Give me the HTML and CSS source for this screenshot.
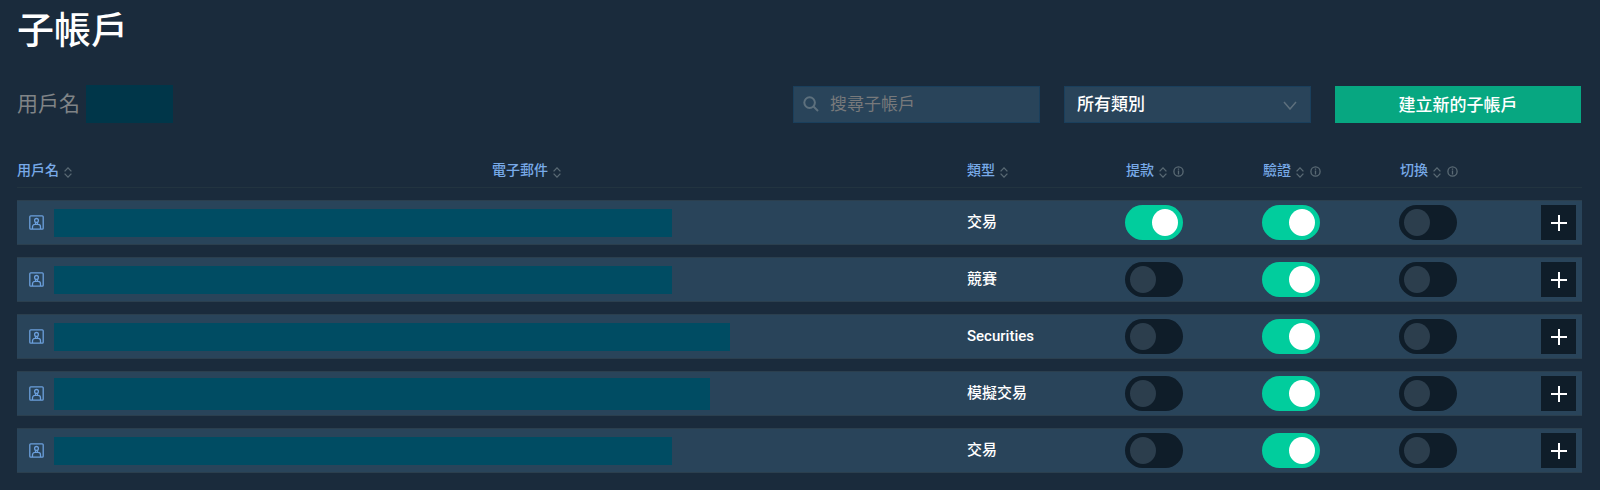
FILE: index.html
```html
<!DOCTYPE html>
<html lang="zh-Hant">
<head>
  <meta charset="UTF-8">
  <meta name="viewport" content="width=device-width, initial-scale=1.0">
  <title>子帳戶</title>
  <link rel="stylesheet" href="styles.css">
</head>
<body>

  <!-- Shared icons -->
  <svg class="sprite" aria-hidden="true">
    <symbol id="sort" viewBox="0 0 8 11">
      <path d="M0.6 4.4 4 0.9 7.4 4.4M0.6 6.6 4 10.1 7.4 6.6"/>
    </symbol>
    <symbol id="info" viewBox="0 0 11 11">
      <circle cx="5.5" cy="5.5" r="4.6"/>
      <path d="M5.5 2.6v1.2M5.5 4.6v3.8"/>
    </symbol>
    <symbol id="user" viewBox="0 0 15 15">
      <rect x="0.8" y="0.8" width="13.4" height="13.4" rx="1"/>
      <circle cx="7.5" cy="5.4" r="1.9"/>
      <path d="M3.5 14v-2.2a2.4 2.4 0 0 1 2.4-2.4h3.2a2.4 2.4 0 0 1 2.4 2.4V14M6.5 7.3v2M8.5 7.3v2"/>
    </symbol>
    <symbol id="plus" viewBox="0 0 16 16">
      <path d="M8 0v16M0 8h16"/>
    </symbol>
  </svg>

  <main>
    <h1>子帳戶</h1>

    <div class="toolbar">
      <div class="account">用戶名 <span class="account-name"></span></div>

      <div class="search">
        <svg class="search-icon" viewBox="0 0 16 16" aria-hidden="true">
          <circle cx="6.6" cy="6.6" r="5.3"/>
          <path d="M10.5 10.5 15 15"/>
        </svg>
        <input type="text" placeholder="搜尋子帳戶" aria-label="搜尋子帳戶">
      </div>

      <div class="filter">
        <select aria-label="類別">
          <option>所有類別</option>
        </select>
        <svg class="arrow" viewBox="0 0 14 9" aria-hidden="true"><path d="M1 1l6 7 6-7"/></svg>
      </div>

      <button class="create" type="button">建立新的子帳戶</button>
    </div>

    <table>
      <colgroup>
        <col>
        <col>
        <col class="col-type">
        <col class="col-switch">
        <col class="col-switch">
        <col class="col-switch">
        <col class="col-more">
      </colgroup>
      <thead>
        <tr>
          <th>用戶名<svg class="sort"><use href="#sort"/></svg></th>
          <th>電子郵件<svg class="sort"><use href="#sort"/></svg></th>
          <th>類型<svg class="sort"><use href="#sort"/></svg></th>
          <th class="option">提款<svg class="sort"><use href="#sort"/></svg><svg class="info"><use href="#info"/></svg></th>
          <th class="option">驗證<svg class="sort"><use href="#sort"/></svg><svg class="info"><use href="#info"/></svg></th>
          <th class="option">切換<svg class="sort"><use href="#sort"/></svg><svg class="info"><use href="#info"/></svg></th>
          <th></th>
        </tr>
      </thead>
      <tbody>
        <tr>
          <td colspan="2"><div class="user"><svg><use href="#user"/></svg><span class="mask"></span></div></td>
          <td class="type">交易</td>
          <td><input class="switch" type="checkbox" aria-label="提款" checked></td>
          <td><input class="switch" type="checkbox" aria-label="驗證" checked></td>
          <td><input class="switch" type="checkbox" aria-label="切換"></td>
          <td><button class="more" type="button" aria-label="展開"><svg><use href="#plus"/></svg></button></td>
        </tr>
        <tr>
          <td colspan="2"><div class="user"><svg><use href="#user"/></svg><span class="mask"></span></div></td>
          <td class="type">競賽</td>
          <td><input class="switch" type="checkbox" aria-label="提款"></td>
          <td><input class="switch" type="checkbox" aria-label="驗證" checked></td>
          <td><input class="switch" type="checkbox" aria-label="切換"></td>
          <td><button class="more" type="button" aria-label="展開"><svg><use href="#plus"/></svg></button></td>
        </tr>
        <tr>
          <td colspan="2"><div class="user"><svg><use href="#user"/></svg><span class="mask mask-long"></span></div></td>
          <td class="type">Securities</td>
          <td><input class="switch" type="checkbox" aria-label="提款"></td>
          <td><input class="switch" type="checkbox" aria-label="驗證" checked></td>
          <td><input class="switch" type="checkbox" aria-label="切換"></td>
          <td><button class="more" type="button" aria-label="展開"><svg><use href="#plus"/></svg></button></td>
        </tr>
        <tr>
          <td colspan="2"><div class="user"><svg><use href="#user"/></svg><span class="mask mask-tall"></span></div></td>
          <td class="type">模擬交易</td>
          <td><input class="switch" type="checkbox" aria-label="提款"></td>
          <td><input class="switch" type="checkbox" aria-label="驗證" checked></td>
          <td><input class="switch" type="checkbox" aria-label="切換"></td>
          <td><button class="more" type="button" aria-label="展開"><svg><use href="#plus"/></svg></button></td>
        </tr>
        <tr>
          <td colspan="2"><div class="user"><svg><use href="#user"/></svg><span class="mask"></span></div></td>
          <td class="type">交易</td>
          <td><input class="switch" type="checkbox" aria-label="提款"></td>
          <td><input class="switch" type="checkbox" aria-label="驗證" checked></td>
          <td><input class="switch" type="checkbox" aria-label="切換"></td>
          <td><button class="more" type="button" aria-label="展開"><svg><use href="#plus"/></svg></button></td>
        </tr>
      </tbody>
    </table>
  </main>

</body>
</html>
```
FILE: styles.css
```css
* {
  box-sizing: border-box;
}

body {
  margin: 0;
  background-color: #1a2b3c;
  color: #fff;
  font-family: Roboto, "Noto Sans CJK TC", sans-serif;
}

main {
  padding: 8px 18px 0 17px;
}

svg {
  fill: none;
  stroke: currentColor;
}

.sprite {
  display: none;
}

h1 {
  margin: 0;
  font-size: 37px;
  font-weight: 500;
  line-height: 48px;
}

/* Toolbar */
.toolbar {
  display: flex;
  align-items: center;
  gap: 24px;
  margin-top: 28px;
  padding-right: 1px;
  height: 40px;
}

.account {
  display: flex;
  align-items: center;
  gap: 6px;
  margin-right: auto;
  color: #808487;
  font-size: 21px;
  line-height: 30px;
}

.account-name {
  width: 87px;
  height: 38px;
  background-color: #003649;
}

.search,
.filter {
  position: relative;
  width: 247px;
}

.search input,
.filter select {
  display: block;
  width: 100%;
  height: 37px;
  border: 1px solid #1a3f5c;
  border-radius: 0;
  background-color: #29445a;
  font-family: inherit;
  font-size: 17px;
}

.search input {
  padding: 0 12px 0 36px;
  color: #fff;
}

.search input::placeholder {
  color: #77797b;
  opacity: 1;
}

.search-icon {
  position: absolute;
  left: 10px;
  top: 10px;
  width: 16px;
  height: 16px;
  color: #5d707d;
  stroke-width: 2;
}

.filter select {
  appearance: none;
  padding: 0 36px 0 12px;
  color: #fff;
  font-weight: 500;
}

.arrow {
  position: absolute;
  right: 14px;
  top: 15px;
  width: 14px;
  height: 9px;
  color: #5d707d;
  stroke-width: 1.5;
  pointer-events: none;
}

.create {
  width: 246px;
  height: 37px;
  padding: 0 0 2px;
  border: 0;
  background-color: #07a781;
  color: #fff;
  font-family: inherit;
  font-size: 17px;
  font-weight: 500;
  cursor: pointer;
}

/* Table */
table {
  width: 100%;
  margin-top: 19px;
  table-layout: fixed;
  border-collapse: separate;
  border-spacing: 0 12px;
}

.col-type {
  width: 158px;
}

.col-switch {
  width: 137px;
}

.col-more {
  width: 46px;
}

th {
  height: 33px;
  padding: 0 0 2px;
  border-bottom: 1px solid #223440;
  color: #78aae8;
  font-size: 14px;
  font-weight: 500;
  line-height: 20px;
  text-align: left;
  white-space: nowrap;
}

th.option {
  padding-left: 1px;
}

th svg {
  color: #5a6a74;
  stroke-width: 1.3;
}

.sort {
  width: 8px;
  height: 11px;
  margin-left: 5px;
  vertical-align: -3px;
}

.info {
  width: 11px;
  height: 11px;
  margin-left: 6px;
  vertical-align: -2px;
}

td {
  height: 45px;
  padding: 0;
  border: 1px solid #2b3f4e;
  border-width: 1px 0;
  background-color: #29445a;
}

.type {
  padding-bottom: 2px;
  font-size: 15px;
  font-weight: 500;
  line-height: 20px;
}

.user {
  display: flex;
  align-items: center;
  gap: 10px;
  padding-left: 12px;
}

.user svg {
  flex: none;
  width: 15px;
  height: 15px;
  color: #6b9fdc;
  stroke-width: 1.3;
}

.mask {
  width: 618px;
  height: 28px;
  background-color: #004c63;
}

.mask-long {
  width: 676px;
}

.mask-tall {
  width: 656px;
  height: 32px;
}

/* Switches */
.switch {
  display: block;
  appearance: none;
  width: 58px;
  height: 35px;
  margin: 0;
  padding: 4px 5px;
  border-radius: 18px;
  background-color: #0f1d29;
  cursor: pointer;
}

.switch::before {
  content: "";
  display: block;
  width: 26px;
  height: 27px;
  border-radius: 50%;
  background-color: #2c3e4d;
}

.switch:checked {
  background-color: #01cd9d;
}

.switch:checked::before {
  margin-left: auto;
  background-color: #fff;
}

.more {
  display: flex;
  align-items: center;
  justify-content: center;
  width: 35px;
  height: 35px;
  margin-left: 5px;
  padding: 0;
  border: 0;
  background-color: #0f1d29;
  color: #fff;
  cursor: pointer;
}

.more svg {
  width: 16px;
  height: 16px;
  stroke-width: 2;
}
```
